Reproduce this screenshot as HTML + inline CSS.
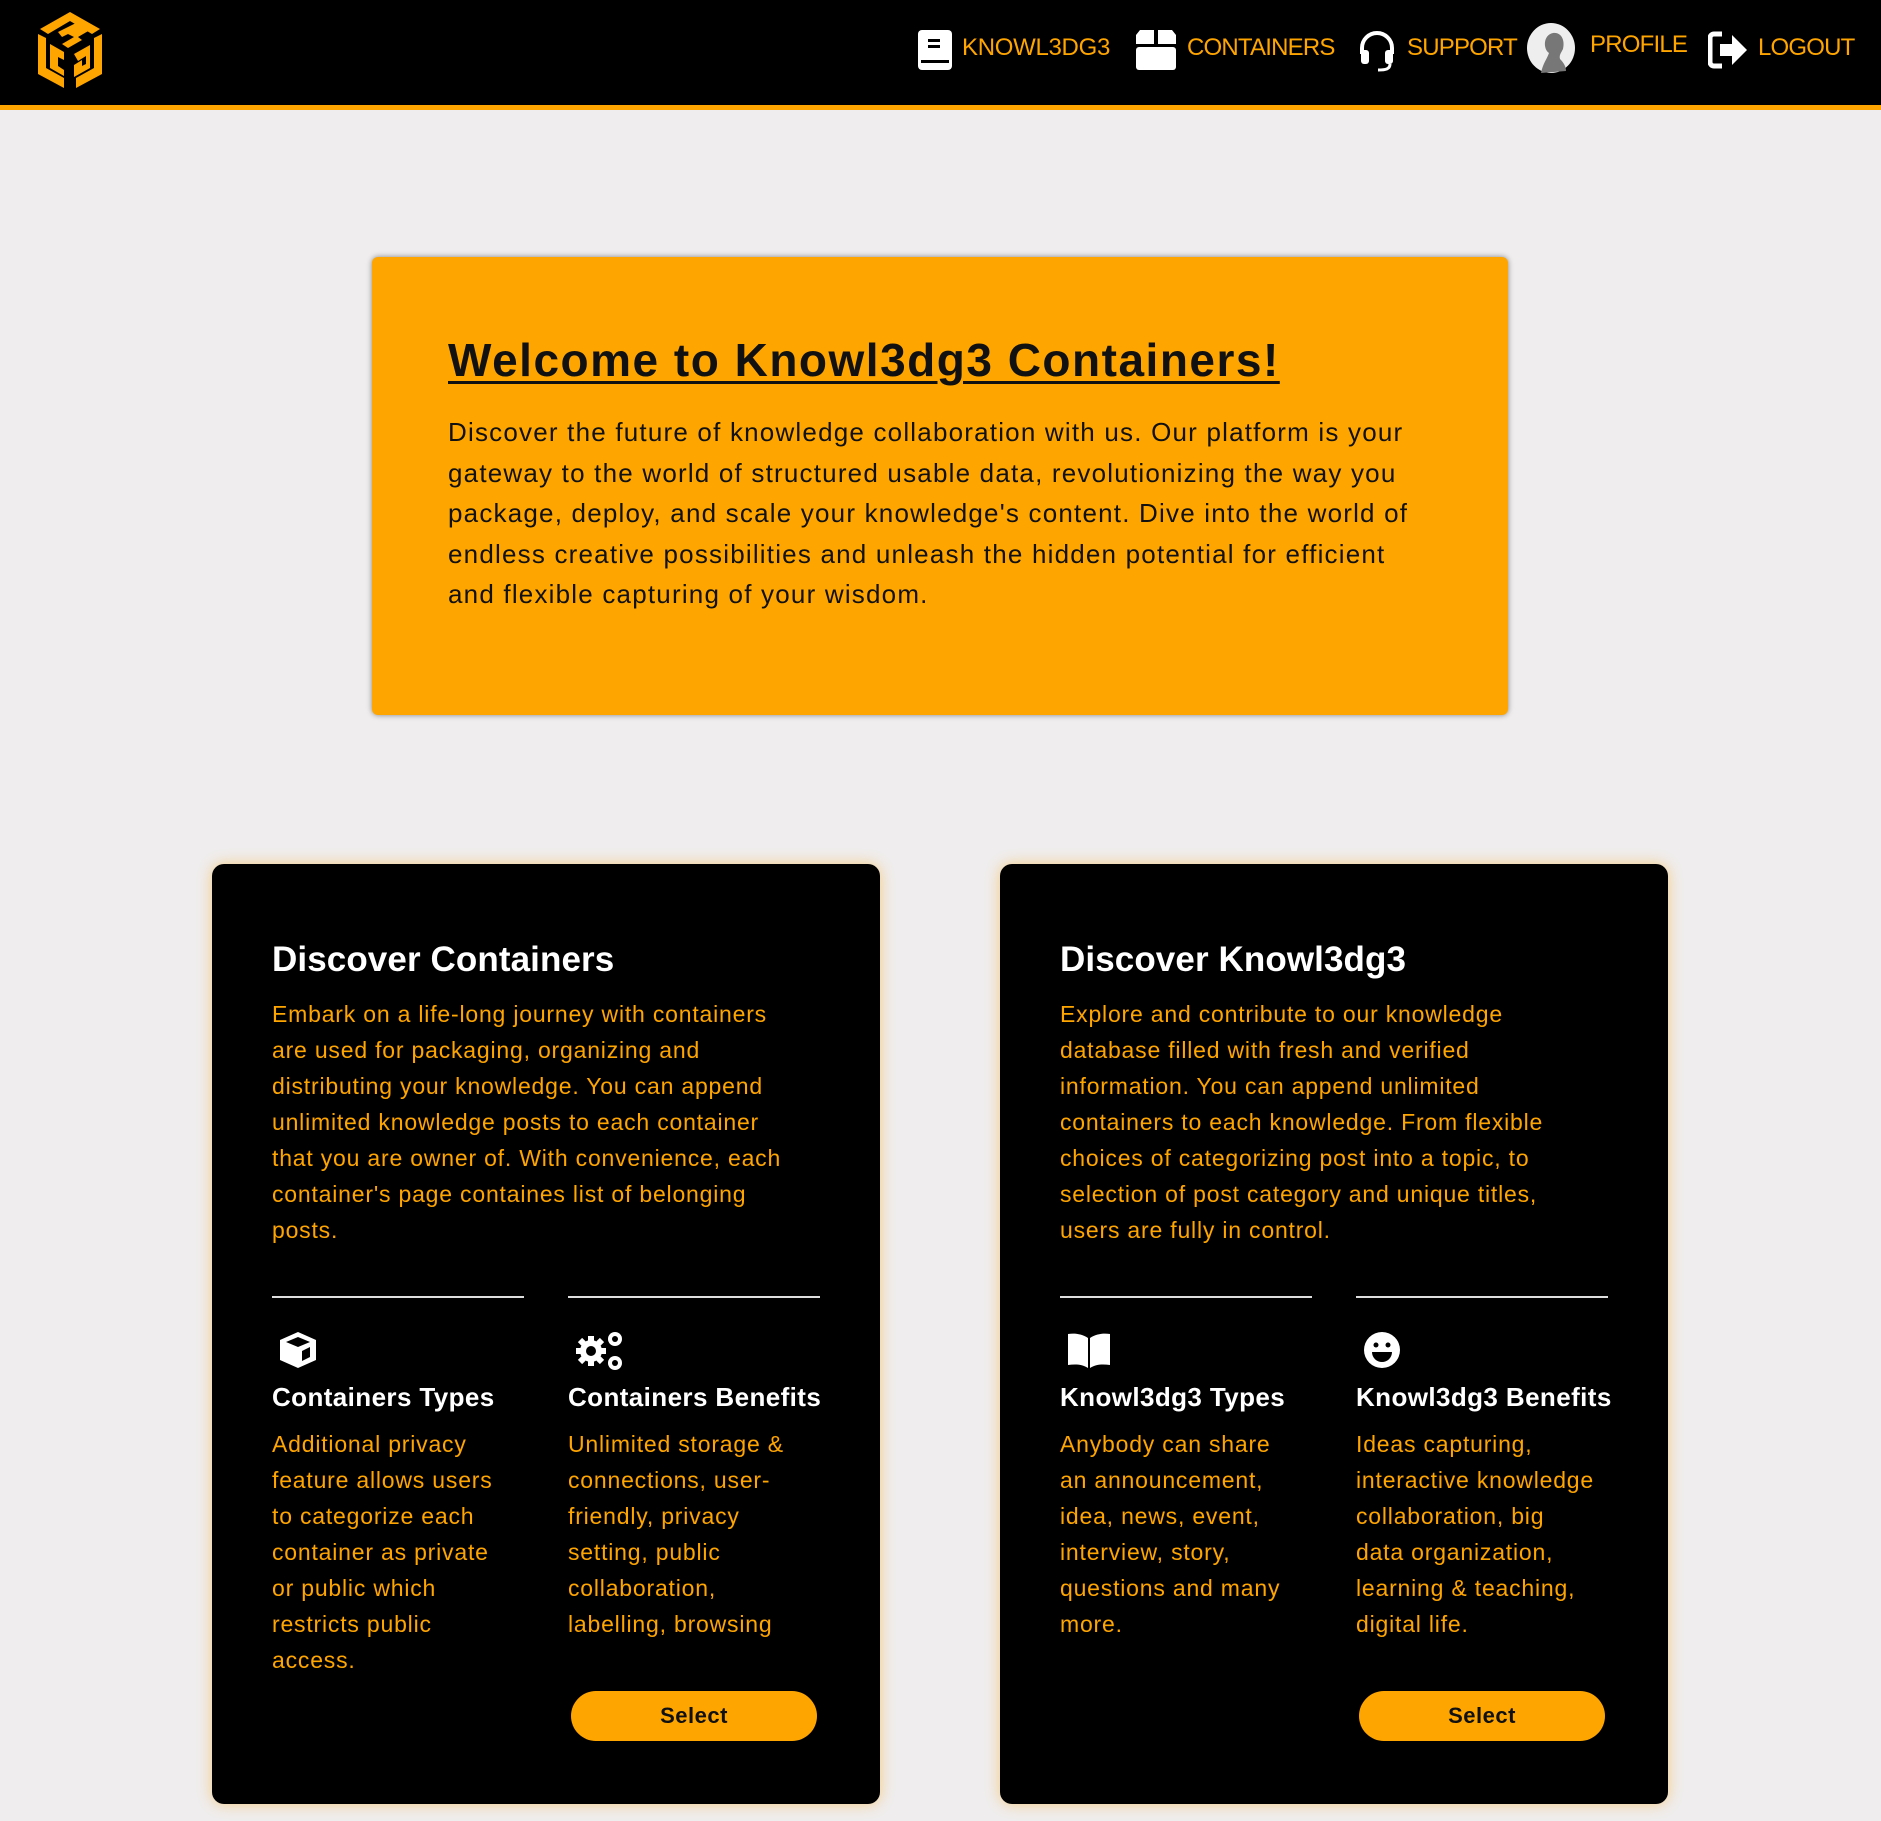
<!DOCTYPE html>
<html><head><meta charset="utf-8"><style>
*{margin:0;padding:0;box-sizing:border-box}
body{width:1881px;height:1821px;background:#efeded;font-family:"Liberation Sans",sans-serif;position:relative;overflow:hidden}
.hdr{position:absolute;left:0;top:0;width:1881px;background:#000;border-bottom:5px solid #ffa500;height:110px}
.nav{position:absolute;color:#ffa500;font-size:24px;line-height:28px;letter-spacing:-0.3px}
.hero{position:absolute;left:372px;top:257px;width:1136px;height:458px;background:#ffa500;border-radius:6px;box-shadow:0 0 6px rgba(0,0,0,.45)}
.hero h1{position:absolute;left:76px;top:76px;font-size:46px;text-decoration:underline;text-decoration-thickness:3px;text-underline-offset:5px;color:#111;letter-spacing:1.5px;white-space:nowrap}
.hero p{position:absolute;left:76px;top:155px;font-size:26px;line-height:40.5px;color:#111;letter-spacing:1.2px;white-space:nowrap}
.card{position:absolute;top:864px;width:668px;height:940px;background:#000;border-radius:12px;box-shadow:0 0 14px rgba(255,165,0,.45)}
.card h2{position:absolute;left:60px;top:76px;color:#fff;font-size:35px;letter-spacing:0.1px;white-space:nowrap}
.card .p{position:absolute;left:60px;top:132px;color:#ffa500;font-size:23px;line-height:36px;letter-spacing:0.8px;white-space:nowrap}
.col{position:absolute;top:432px;width:252px}
.col .ln{height:2px;background:#ddd;width:252px}
.col svg{position:absolute;top:34px;left:6px}
.col h3{position:absolute;top:86px;left:0;color:#fff;font-size:26px;letter-spacing:0.4px;white-space:nowrap}
.col .t{position:absolute;top:130px;left:0;color:#ffa500;font-size:23px;line-height:36px;letter-spacing:0.8px;white-space:nowrap}
.btn{position:absolute;top:827px;width:246px;height:50px;border-radius:25px;background:#ffa500;color:#111;font-weight:bold;font-size:22px;text-align:center;line-height:50px;letter-spacing:0.5px}
</style></head><body>
<div class="hdr"></div>
<svg style="position:absolute;left:34px;top:10px" width="72" height="80" viewBox="0 0 72 80">
<g fill="#ffa500">
<polygon points="36,2 66,19 58,24 36,11 14,24 6,19"/>
<polygon points="24,22 44,12 56,20 44,27 48,30 34,38 28,34 40,27 34,24 28,27"/>
<polygon points="4,24 12,28 12,58 30,68 30,78 4,64"/>
<polygon points="16,34 30,42 30,50 24,47 24,56 30,60 30,66 16,58"/>
<polygon points="68,24 60,28 60,58 42,68 42,78 68,64"/>
<polygon points="40,44 56,35 56,58 40,67 40,55 48,50 48,56 52,54 52,46 44,51"/>
</g></svg>
<svg style="position:absolute;left:918px;top:30px" width="34" height="40" viewBox="0 0 34 40"><rect x="0" y="0" width="34" height="40" rx="4" fill="#fff"/><rect x="10" y="9" width="12" height="3" fill="#000"/><rect x="10" y="15" width="12" height="3" fill="#000"/><rect x="3" y="30" width="28" height="3" fill="#000"/></svg>
<div class="nav" style="left:962px;top:34px">KNOWL3DG3</div>
<svg style="position:absolute;left:1136px;top:30px" width="40" height="40" viewBox="0 0 40 40"><path d="M4 0h14v14H0V5z M22 0h14l4 5v9H22z" fill="#fff"/><rect x="0" y="17" width="40" height="23" rx="3" fill="#fff"/></svg>
<div class="nav" style="left:1187px;top:34px;letter-spacing:-0.8px">CONTAINERS</div>
<svg style="position:absolute;left:1357px;top:30px" width="40" height="42" viewBox="0 0 40 42"><path d="M5 24v-6a15 15 0 0 1 30 0v6" stroke="#fff" stroke-width="4" fill="none"/><rect x="4" y="20" width="8" height="14" rx="3" fill="#fff"/><rect x="28" y="20" width="8" height="14" rx="3" fill="#fff"/><path d="M33 34c0 5-4 6-12 6" stroke="#fff" stroke-width="3" fill="none"/></svg>
<div class="nav" style="left:1407px;top:34px;letter-spacing:-0.8px">SUPPORT</div>
<svg style="position:absolute;left:1527px;top:23px" width="48" height="50" viewBox="0 0 48 50"><ellipse cx="24" cy="25" rx="24" ry="25" fill="#eee"/><path d="M14 50c2-10 6-14 8-20-6-4-6-18 4-20 9-1 12 8 10 16-2 4-4 6-3 10 4 4 6 8 6 12z" fill="#777"/></svg>
<div class="nav" style="left:1590px;top:31px;letter-spacing:-0.8px">PROFILE</div>
<svg style="position:absolute;left:1708px;top:30px" width="40" height="40" viewBox="0 0 40 40"><path d="M14 4H6a4 4 0 0 0-4 4v24a4 4 0 0 0 4 4h8" stroke="#fff" stroke-width="5" fill="none"/><path d="M12 14h12V5l15 15-15 15v-9H12z" fill="#fff"/></svg>
<div class="nav" style="left:1758px;top:34px;letter-spacing:-0.8px">LOGOUT</div>

<div class="hero">
<h1>Welcome to Knowl3dg3 Containers!</h1>
<p>Discover the future of knowledge collaboration with us. Our platform is your<br>gateway to the world of structured usable data, revolutionizing the way you<br>package, deploy, and scale your knowledge's content. Dive into the world of<br>endless creative possibilities and unleash the hidden potential for efficient<br>and flexible capturing of your wisdom.</p>
</div>

<div class="card" style="left:212px">
<h2>Discover Containers</h2>
<div class="p">Embark on a life-long journey with containers<br>are used for packaging, organizing and<br>distributing your knowledge. You can append<br>unlimited knowledge posts to each container<br>that you are owner of. With convenience, each<br>container's page containes list of belonging<br>posts.</div>
<div class="col" style="left:60px"><div class="ln"></div>
<svg width="40" height="40" viewBox="0 0 40 40"><path d="M20 2L38 10V30L20 38L2 30V10Z" fill="#fff"/><path d="M8 12L20 7L32 12L20 17Z" fill="#000"/><path d="M24 21L32 17V27L24 31Z" fill="#000"/></svg>
<h3>Containers Types</h3>
<div class="t">Additional privacy<br>feature allows users<br>to categorize each<br>container as private<br>or public which<br>restricts public<br>access.</div></div>
<div class="col" style="left:356px"><div class="ln"></div>
<svg width="52" height="42" viewBox="0 0 52 42"><g fill="#fff"><circle cx="17" cy="21" r="11"/><g stroke="#fff" stroke-width="6"><line x1="17" y1="6" x2="17" y2="36"/><line x1="2" y1="21" x2="32" y2="21"/><line x1="6" y1="10" x2="28" y2="32"/><line x1="28" y1="10" x2="6" y2="32"/></g><circle cx="41" cy="9" r="7"/><circle cx="41" cy="33" r="7"/></g><circle cx="17" cy="21" r="5" fill="#000"/><circle cx="41" cy="9" r="3" fill="#000"/><circle cx="41" cy="33" r="3" fill="#000"/></svg>
<h3>Containers Benefits</h3>
<div class="t">Unlimited storage &amp;<br>connections, user-<br>friendly, privacy<br>setting, public<br>collaboration,<br>labelling, browsing</div></div>
<div class="btn" style="left:359px">Select</div>
</div>

<div class="card" style="left:1000px">
<h2>Discover Knowl3dg3</h2>
<div class="p">Explore and contribute to our knowledge<br>database filled with fresh and verified<br>information. You can append unlimited<br>containers to each knowledge. From flexible<br>choices of categorizing post into a topic, to<br>selection of post category and unique titles,<br>users are fully in control.</div>
<div class="col" style="left:60px"><div class="ln"></div>
<svg width="46" height="40" viewBox="0 0 46 40"><path d="M2 4C9 3 16 4 22 8V38C16 34 9 34 2 35Z" fill="#fff"/><path d="M44 4C37 3 30 4 24 8V38C30 34 37 34 44 35Z" fill="#fff"/></svg>
<h3>Knowl3dg3 Types</h3>
<div class="t">Anybody can share<br>an announcement,<br>idea, news, event,<br>interview, story,<br>questions and many<br>more.</div></div>
<div class="col" style="left:356px"><div class="ln"></div>
<svg width="40" height="40" viewBox="0 0 40 40"><circle cx="20" cy="20" r="18" fill="#fff"/><circle cx="14" cy="15" r="2.5" fill="#000"/><circle cx="26" cy="15" r="2.5" fill="#000"/><path d="M10 22h20a10 10 0 0 1-20 0z" fill="#000"/></svg>
<h3>Knowl3dg3 Benefits</h3>
<div class="t">Ideas capturing,<br>interactive knowledge<br>collaboration, big<br>data organization,<br>learning &amp; teaching,<br>digital life.</div></div>
<div class="btn" style="left:359px">Select</div>
</div>
</body></html>
